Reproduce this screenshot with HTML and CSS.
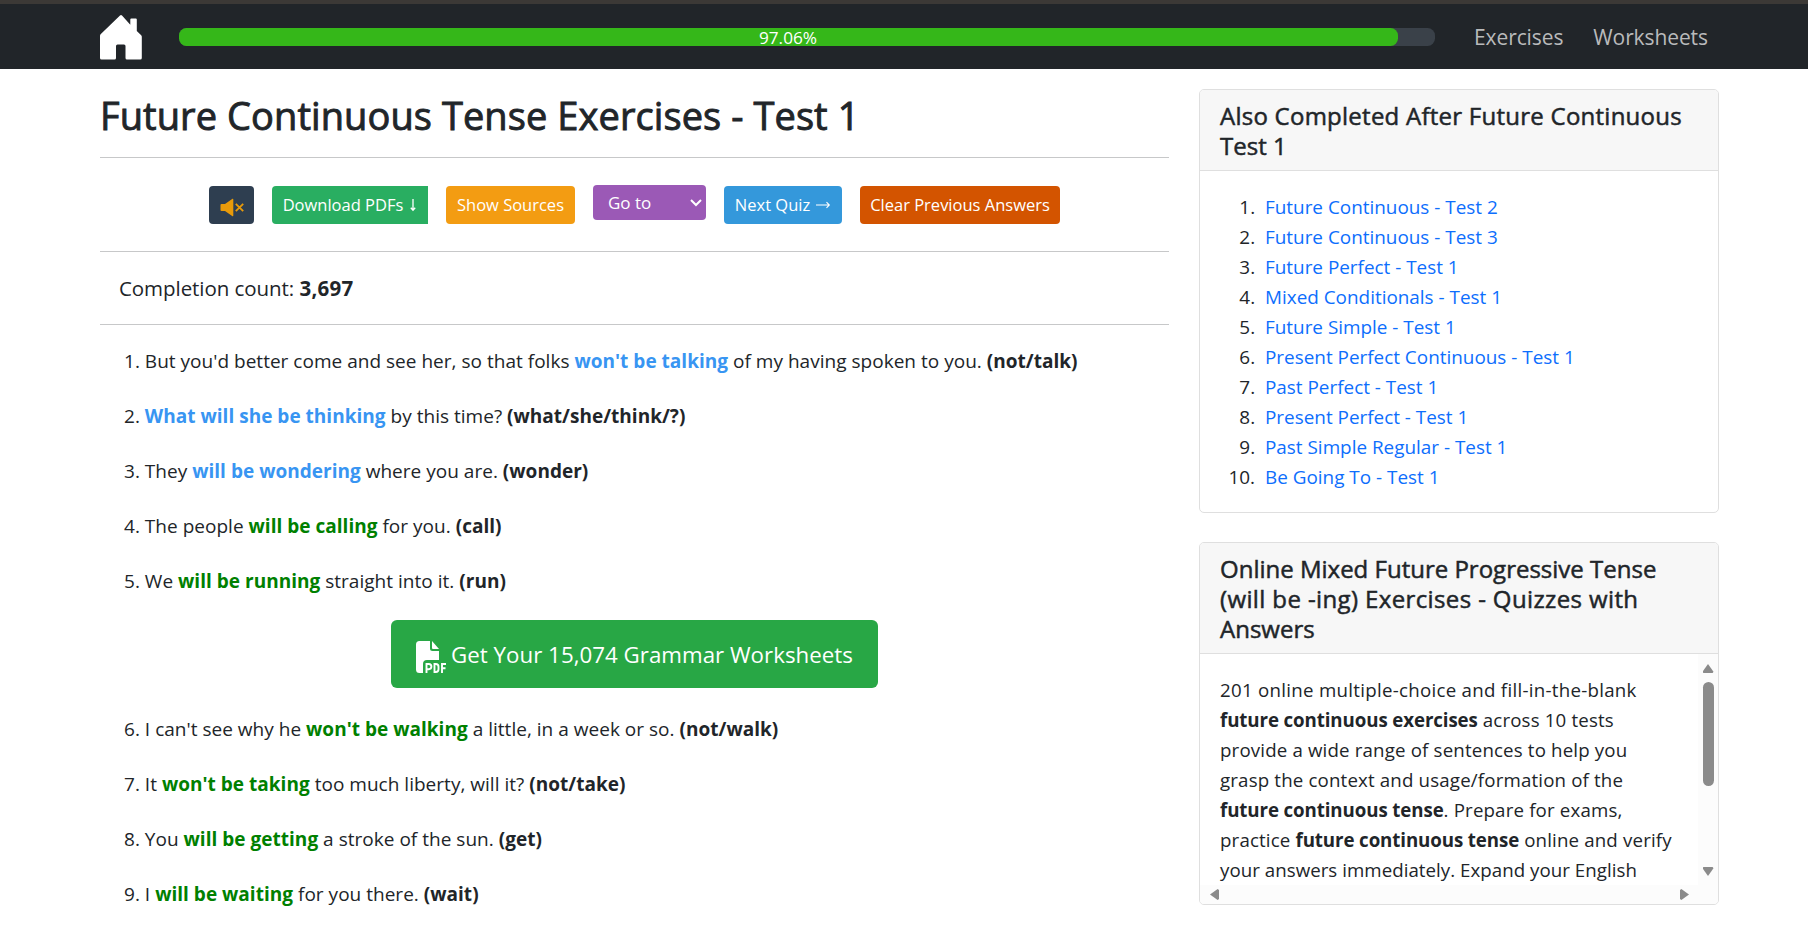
FILE: index.html
```
<!DOCTYPE html>
<html lang="en">
<head>
<meta charset="utf-8">
<title>Future Continuous Tense Exercises - Test 1</title>
<link rel="stylesheet" href="styles.css">
</head>
<body>
<header class="navbar">
  <a class="home" aria-label="Home"><svg viewBox="0 0 42 45" width="42" height="45"><path d="M20 .6q1-1 2 0L30.300 9.800V4.500q0-1 1-1h4.500q1 0 1 1v11.500l4.400 4.200q.6.700.6 1.500V43q0 1.500-1.500 1.500H27q-1.500 0-1.500-1.500V31q0-1.500-1.500-1.500h-6.500Q16 29.500 16 31v12q0 1.500-1.500 1.500h-13Q0 44.500 0 43V21q0-1 .6-1.700z" fill="#fff"/></svg></a>
  <div class="progress"><div class="progress-bar" style="width:97.06%"></div><span class="progress-label">97.06%</span></div>
  <nav class="links"><a>Exercises</a><a>Worksheets</a></nav>
</header>
<main class="layout">
  <section class="content">
    <h1 class="title">Future Continuous Tense Exercises - Test 1</h1>
    <div class="toolbar">
      <button class="btn mute" aria-label="Mute"><svg viewBox="0 0 24 20" width="24" height="20"><path d="M1.500 6H5L12.500.8q.8-.4.800.6v16.200q0 1-.8.600L5 13H1.500Q.5 13 .5 12V7q0-1 1-1z" fill="#e89a0a"/><path d="M15.800 5.800l7.400 7.400M23.200 5.800l-7.400 7.400" stroke="#e89a0a" stroke-width="1.800"/></svg></button>
      <button class="btn pdfs"><span>Download PDFs</span><svg viewBox="0 0 8 14" width="8" height="14"><path d="M4 1v11M1.800 9.800L4 12.300l2.200-2.500" fill="none" stroke="#fff" stroke-width="1.300"/></svg></button>
      <button class="btn sources"><span>Show Sources</span></button>
      <button class="btn goto"><span>Go to</span><svg viewBox="0 0 12 8" width="12" height="8"><path d="M1 1l5 5 5-5" fill="none" stroke="#fff" stroke-width="2"/></svg></button>
      <button class="btn next"><span>Next Quiz</span><svg viewBox="0 0 15 8" width="15" height="8"><path d="M0 4h13M10.500 1.200L13.300 4l-2.800 2.800" fill="none" stroke="#fff" stroke-width="1.100"/></svg></button>
      <button class="btn clear"><span>Clear Previous Answers</span></button>
    </div>
    <p class="count">Completion count: <b>3,697</b></p>
    <div class="questions">
      <p class="q">1. But you'd better come and see her, so that folks <b class="blue">won't be talking</b> of my having spoken to you. <b>(not/talk)</b></p>
      <p class="q">2. <b class="blue">What will she be thinking</b> by this time? <b>(what/she/think/?)</b></p>
      <p class="q">3. They <b class="blue">will be wondering</b> where you are. <b>(wonder)</b></p>
      <p class="q">4. The people <b class="green">will be calling</b> for you. <b>(call)</b></p>
      <p class="q">5. We <b class="green">will be running</b> straight into it. <b>(run)</b></p>
      <a class="cta"><svg viewBox="0 0 30 32" width="30" height="32"><path d="M3.500 0H14v7.500Q14 10 16.500 10H23v9H11q-4 0-4 4v9H3.500Q0 32 0 28.500v-25Q0 0 3.500 0z" fill="#fff"/><path d="M16 0l7 8h-6q-1 0-1-1z" fill="#fff"/><path d="M10.500 32v-9h2.300a2.600 2.600 0 0 1 0 5.200h-2.300M18.500 23v8h1.300q2.700 0 2.700-2.700v-2.600q0-2.700-2.700-2.700zM26 32v-9h4M26 27.300h3.500" fill="none" stroke="#fff" stroke-width="1.900"/></svg><span>Get Your 15,074 Grammar Worksheets</span></a>
      <p class="q">6. I can't see why he <b class="green">won't be walking</b> a little, in a week or so. <b>(not/walk)</b></p>
      <p class="q">7. It <b class="green">won't be taking</b> too much liberty, will it? <b>(not/take)</b></p>
      <p class="q">8. You <b class="green">will be getting</b> a stroke of the sun. <b>(get)</b></p>
      <p class="q">9. I <b class="green">will be waiting</b> for you there. <b>(wait)</b></p>
    </div>
  </section>
  <aside class="side">
    <section class="card">
      <h2 class="card-title"><span class="wide">Also Completed After Future Continuous</span><br>Test 1</h2>
      <ol class="list">
        <li><a>Future Continuous - Test 2</a></li>
        <li><a>Future Continuous - Test 3</a></li>
        <li><a>Future Perfect - Test 1</a></li>
        <li><a>Mixed Conditionals - Test 1</a></li>
        <li><a>Future Simple - Test 1</a></li>
        <li><a>Present Perfect Continuous - Test 1</a></li>
        <li><a>Past Perfect - Test 1</a></li>
        <li><a>Present Perfect - Test 1</a></li>
        <li><a>Past Simple Regular - Test 1</a></li>
        <li><a>Be Going To - Test 1</a></li>
      </ol>
    </section>
    <section class="card about">
      <h2 class="card-title">Online Mixed Future Progressive Tense<br><span class="wider">(will be -ing) Exercises - Quizzes with</span><br>Answers</h2>
      <div class="scroller">
        <div class="about-text"><span class="wide">201 online multiple-choice and fill-in-the-blank</span><br><b>future continuous exercises</b> across 10 tests<br>provide a wide range of sentences to help you<br>grasp the context and usage/formation of the<br><b>future continuous tense</b>. Prepare for exams,<br>practice <b>future continuous tense</b> online and verify<br><span class="snug">your answers immediately. Expand your English</span></div>
        <div class="vbar"><i class="tri up"></i><i class="thumb"></i><i class="tri down"></i></div>
        <div class="hbar"><i class="tri left"></i><i class="tri right"></i></div>
      </div>
    </section>
  </aside>
</main>
</body>
</html>
```
FILE: styles.css
```
* { box-sizing: border-box; }
body { margin: 0; height: 930px; overflow: hidden; background: #fff; color: #212529; font-family: "Open Sans", "Noto Sans", sans-serif; font-size: 18.7px; line-height: 30px; }
p, h1, h2, ol { margin: 0; }
b { font-weight: 700; }
.navbar { height: 69px; border-top: 4px solid #3c3936; background: #212529; display: flex; align-items: center; padding: 0 100px; }
.home { display: block; flex: none; width: 42px; height: 45px; margin: 1px 37px 0 0; }
.home svg { display: block; }
.progress { position: relative; flex: none; width: 1256px; height: 18px; border-radius: 7.500px; background: #3a4149; }
.progress-bar { height: 18px; border-radius: 7.500px; background: #35b719; }
.progress-label { position: absolute; top: -2px; left: 0; right: 38px; text-align: center; color: #fff; font-size: 17.2px; line-height: 23px; }
.links { display: flex; gap: 30px; margin-left: 39px; color: #b9babb; font-size: 21px; letter-spacing: -.1px; }
.layout { display: flex; gap: 30px; padding: 20px 0 0 100px; }
.content { width: 1069px; }
.title { height: 69px; border-bottom: 1px solid #c7c8c9; font-size: 38px; letter-spacing: .08px; font-weight: 400; -webkit-text-stroke: .9px currentColor; line-height: 52px; white-space: nowrap; }
.toolbar { height: 94px; border-bottom: 1px solid #c7c8c9; display: flex; justify-content: center; align-items: flex-start; gap: 18px; padding-top: 28px; }
.btn { border: 0; border-radius: 4px; height: 38px; padding: 0; color: #fff; font: 400 16.5px/38px "Open Sans", sans-serif; display: flex; align-items: center; justify-content: center; gap: 6px; white-space: nowrap; }
.mute { width: 45px; background: #2e3e50; padding-top: 5px; }
.pdfs { width: 156px; background: #29ae61; border-radius: 4px 0 0 4px; }
.sources { width: 129px; background: #f39c12; }
.goto { width: 113px; height: 35px; margin-top: -1px; background: #9b59b6; justify-content: space-between; padding: 0 4px 0 15px; font-size: 17px; }
.next { width: 118px; background: #3498db; }
.clear { width: 200px; background: #d35400; }
.count { height: 73px; border-bottom: 1px solid #c7c8c9; padding-left: 19px; font-size: 20.500px; letter-spacing: -.06px; line-height: 73px; }
.count b { letter-spacing: .3px; }
.questions { padding: 9px 0 0 24px; font-size: 19px; letter-spacing: .02px; }
.q { height: 55px; line-height: 55px; white-space: nowrap; }
.blue { color: #3895f2; }
.green { color: #008000; }
.cta { display: flex; align-items: center; width: 487px; height: 68px; margin: 11px 0 14px 267px; padding-left: 25px; gap: 5px; background: #28a745; border-radius: 6px; color: #fff; font-size: 22.300px; white-space: nowrap; }
.cta svg { margin-top: 5px; }
.cta span { padding-top: 1px; }
.side { width: 520px; }
.card { height: 424px; border: 1px solid #dfdfdf; border-radius: 5px; overflow: hidden; white-space: nowrap; }
.card-title { padding: 11px 20px; background: #f7f7f7; border-bottom: 1px solid #dfdfdf; font-size: 24px; font-weight: 400; -webkit-text-stroke: .5px currentColor; line-height: 30px; height: 81px; }
.card-title .wide { letter-spacing: .25px; }
.card-title .wider { letter-spacing: .38px; }
.list { padding: 21px 0 0 60px; font-size: 18.9px; }
.list a { color: #0d6efd; }
.list li { padding-left: 5px; }
.about { margin-top: 29px; height: 363px; }
.about .card-title { height: 111px; }
.scroller { display: grid; grid-template: 231px 19px / 1fr 20px; }
.about-text { padding: 21px 0 0 20px; overflow: hidden; letter-spacing: .16px; }
.about-text .wide { letter-spacing: .28px; }
.about-text .snug { letter-spacing: .04px; }
.about-text b { letter-spacing: -.1px; }
.vbar { background: #fcfcfc; display: flex; flex-direction: column; align-items: center; padding-top: 10px; }
.hbar { grid-column: 1 / 3; background: #fcfcfc; display: flex; justify-content: space-between; align-items: center; padding: 0 29px 0 10px; }
.tri { width: 11px; height: 9px; background: #8b8b8b; }
.up { clip-path: polygon(50% 0, 100% 85%, 92% 100%, 8% 100%, 0 85%); }
.thumb { width: 11px; height: 104px; margin: 9px 0 81px; border-radius: 6px; background: #8b8b8b; }
.down { clip-path: polygon(50% 100%, 100% 15%, 92% 0, 8% 0, 0 15%); }
.left, .right { width: 9px; height: 11px; }
.left { clip-path: polygon(0 50%, 85% 0, 100% 8%, 100% 92%, 85% 100%); }
.right { clip-path: polygon(100% 50%, 15% 0, 0 8%, 0 92%, 15% 100%); }
```
